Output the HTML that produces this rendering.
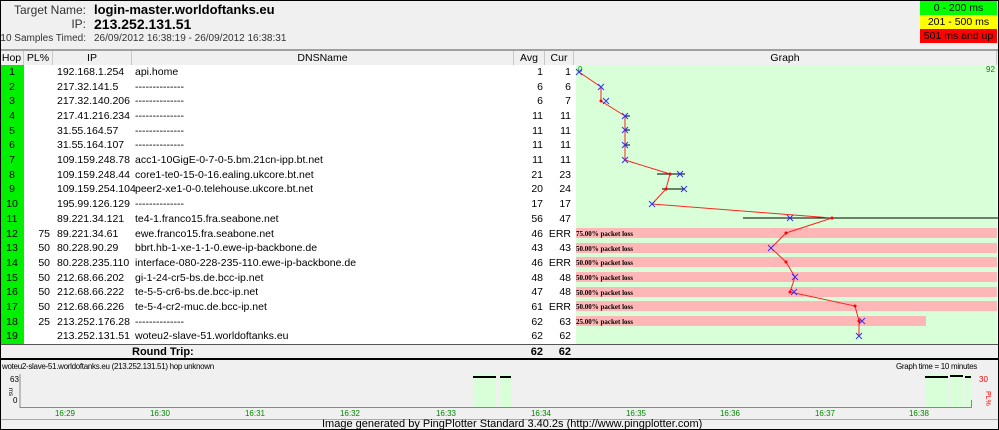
<!DOCTYPE html>
<html><head><meta charset="utf-8"><style>
*{margin:0;padding:0;box-sizing:border-box}
body{width:999px;height:430px;overflow:hidden;background:#f0f0f0;font-family:"Liberation Sans",sans-serif;font-size:10.5px;color:#000;position:relative}
.a{position:absolute;white-space:nowrap}
.lb{position:absolute;white-space:nowrap;right:913px;text-align:right;color:#333}
.r{position:absolute;left:0;width:999px;height:15px;line-height:15px}
.r div{position:absolute;top:0;height:15px}
.h{left:0;width:24px;background:#00f000;text-align:center}
.p{left:24px;width:28px;text-align:right;padding-right:2px}
.ip{left:57px}
.d{left:135px}
.av{left:514px;width:29px;text-align:right}
.cu{left:545px;width:26px;text-align:right}
.th{position:absolute;top:51px;height:14px;line-height:14px;text-align:center;background:#f0f0f0;border-right:1px solid #c8c8c8}
</style></head><body>
<div class="lb" style="top:3px;font-size:12px">Target Name:</div>
<div class="a" style="left:94px;top:2px;font-size:13px;font-weight:bold">login-master.worldoftanks.eu</div>
<div class="lb" style="top:17px;font-size:12px">IP:</div>
<div class="a" style="left:94px;top:16px;font-size:14px;font-weight:bold">213.252.131.51</div>
<div class="lb" style="top:33px;font-size:10px">10 Samples Timed:</div>
<div class="a" style="left:94px;top:33px;font-size:10px;color:#333">26/09/2012 16:38:19 - 26/09/2012 16:38:31</div>
<div class="a" style="left:920px;top:1px;width:77px;height:14px;background:#00ff00;text-align:center;line-height:14px">0 - 200 ms</div>
<div class="a" style="left:920px;top:15px;width:77px;height:14px;background:#ffff00;text-align:center;line-height:14px">201 - 500 ms</div>
<div class="a" style="left:920px;top:29px;width:77px;height:14px;background:#ff0000;text-align:center;line-height:14px">501 ms and up</div>
<div class="a" style="left:0;top:49px;width:999px;height:2px;background:#a0a0a0"></div>
<div class="a" style="left:0;top:65px;width:999px;height:279px;background:#fff"></div>
<div class="th" style="left:0;width:24px">Hop</div>
<div class="th" style="left:24px;width:29px">PL%</div>
<div class="th" style="left:53px;width:79px">IP</div>
<div class="th" style="left:132px;width:382px">DNSName</div>
<div class="th" style="left:514px;width:31px">Avg</div>
<div class="th" style="left:545px;width:29px">Cur</div>
<div class="th" style="left:574px;width:423px">Graph</div>
<div class="a" style="left:576px;top:65px;width:421px;height:279px;background:#d9ffd9"></div>
<svg class="a" style="left:0;top:0" width="999" height="360">
<g fill="#ffb6b6">
<rect x="576" y="228" width="421" height="10"/><rect x="576" y="243" width="421" height="10"/><rect x="576" y="257" width="421" height="10"/><rect x="576" y="272" width="421" height="10"/><rect x="576" y="287" width="421" height="10"/><rect x="576" y="301" width="421" height="10"/><rect x="576" y="316" width="350" height="10"/>
</g>
<g font-family="Liberation Serif" font-size="7" font-weight="bold" fill="#000">
<text x="576" y="236">75.00% packet loss</text><text x="576" y="251">50.00% packet loss</text><text x="576" y="265">50.00% packet loss</text><text x="576" y="280">50.00% packet loss</text><text x="576" y="295">50.00% packet loss</text><text x="576" y="309">50.00% packet loss</text><text x="576" y="324">25.00% packet loss</text>
</g>
<text x="578" y="72" font-size="8" fill="#080">0</text><text x="986" y="72" font-size="8" fill="#080">92</text>
<g stroke="#000" stroke-width="1">
<line x1="743" y1="218" x2="999" y2="218"/><line x1="657" y1="174" x2="685" y2="174"/><line x1="662" y1="189" x2="685" y2="189"/><line x1="625" y1="116" x2="630" y2="116"/><line x1="625" y1="130" x2="630" y2="130"/><line x1="625" y1="145" x2="630" y2="145"/>
</g>
<polyline fill="none" stroke="#f22" stroke-width="1" points="579,72 601,87 601,101 625,116 625,130 625,145 625,160 670,174 666,189 652,204 832,218 786,233 771,248 786,262 795,277 790,292 855,306 859,321 859,336"/>
<g fill="#f00">
<circle cx="670" cy="174" r="1.5"/><circle cx="666" cy="189" r="1.5"/><circle cx="832" cy="218" r="1.5"/><circle cx="786" cy="233" r="1.5"/><circle cx="786" cy="262" r="1.5"/><circle cx="790" cy="292" r="1.5"/><circle cx="855" cy="306" r="1.5"/><circle cx="859" cy="321" r="1.5"/><circle cx="601" cy="101" r="1.5"/>
</g>
<g stroke="#33f" stroke-width="1" fill="none">
<path d="M576,69l6,6m0-6l-6,6M598,84l6,6m0-6l-6,6M603,98l6,6m0-6l-6,6M622,113l6,6m0-6l-6,6M622,127l6,6m0-6l-6,6M622,142l6,6m0-6l-6,6M622,157l6,6m0-6l-6,6M677,171l6,6m0-6l-6,6M681,186l6,6m0-6l-6,6M649,201l6,6m0-6l-6,6M787,215l6,6m0-6l-6,6M768,245l6,6m0-6l-6,6M792,274l6,6m0-6l-6,6M791,289l6,6m0-6l-6,6M859,318l6,6m0-6l-6,6M856,333l6,6m0-6l-6,6"/>
</g>
<line x1="0" y1="344.5" x2="999" y2="344.5" stroke="#555"/>
<line x1="0" y1="359" x2="999" y2="359" stroke="#000" stroke-width="2"/>
</svg>
<div class="r" style="top:65px"><div class="h">1</div><div class="ip">192.168.1.254</div><div class="d">api.home</div><div class="av">1</div><div class="cu">1</div></div>
<div class="r" style="top:80px"><div class="h">2</div><div class="ip">217.32.141.5</div><div class="d">--------------</div><div class="av">6</div><div class="cu">6</div></div>
<div class="r" style="top:94px"><div class="h">3</div><div class="ip">217.32.140.206</div><div class="d">--------------</div><div class="av">6</div><div class="cu">7</div></div>
<div class="r" style="top:109px"><div class="h">4</div><div class="ip">217.41.216.234</div><div class="d">--------------</div><div class="av">11</div><div class="cu">11</div></div>
<div class="r" style="top:124px"><div class="h">5</div><div class="ip">31.55.164.57</div><div class="d">--------------</div><div class="av">11</div><div class="cu">11</div></div>
<div class="r" style="top:138px"><div class="h">6</div><div class="ip">31.55.164.107</div><div class="d">--------------</div><div class="av">11</div><div class="cu">11</div></div>
<div class="r" style="top:153px"><div class="h">7</div><div class="ip">109.159.248.78</div><div class="d">acc1-10GigE-0-7-0-5.bm.21cn-ipp.bt.net</div><div class="av">11</div><div class="cu">11</div></div>
<div class="r" style="top:168px"><div class="h">8</div><div class="ip">109.159.248.44</div><div class="d">core1-te0-15-0-16.ealing.ukcore.bt.net</div><div class="av">21</div><div class="cu">23</div></div>
<div class="r" style="top:182px"><div class="h">9</div><div class="ip">109.159.254.104</div><div class="d">peer2-xe1-0-0.telehouse.ukcore.bt.net</div><div class="av">20</div><div class="cu">24</div></div>
<div class="r" style="top:197px"><div class="h">10</div><div class="ip">195.99.126.129</div><div class="d">--------------</div><div class="av">17</div><div class="cu">17</div></div>
<div class="r" style="top:212px"><div class="h">11</div><div class="ip">89.221.34.121</div><div class="d">te4-1.franco15.fra.seabone.net</div><div class="av">56</div><div class="cu">47</div></div>
<div class="r" style="top:227px"><div class="h">12</div><div class="p">75</div><div class="ip">89.221.34.61</div><div class="d">ewe.franco15.fra.seabone.net</div><div class="av">46</div><div class="cu">ERR</div></div>
<div class="r" style="top:241px"><div class="h">13</div><div class="p">50</div><div class="ip">80.228.90.29</div><div class="d">bbrt.hb-1-xe-1-1-0.ewe-ip-backbone.de</div><div class="av">43</div><div class="cu">43</div></div>
<div class="r" style="top:256px"><div class="h">14</div><div class="p">50</div><div class="ip">80.228.235.110</div><div class="d">interface-080-228-235-110.ewe-ip-backbone.de</div><div class="av">46</div><div class="cu">ERR</div></div>
<div class="r" style="top:271px"><div class="h">15</div><div class="p">50</div><div class="ip">212.68.66.202</div><div class="d">gi-1-24-cr5-bs.de.bcc-ip.net</div><div class="av">48</div><div class="cu">48</div></div>
<div class="r" style="top:285px"><div class="h">16</div><div class="p">50</div><div class="ip">212.68.66.222</div><div class="d">te-5-5-cr6-bs.de.bcc-ip.net</div><div class="av">47</div><div class="cu">48</div></div>
<div class="r" style="top:300px"><div class="h">17</div><div class="p">50</div><div class="ip">212.68.66.226</div><div class="d">te-5-4-cr2-muc.de.bcc-ip.net</div><div class="av">61</div><div class="cu">ERR</div></div>
<div class="r" style="top:315px"><div class="h">18</div><div class="p">25</div><div class="ip">213.252.176.28</div><div class="d">--------------</div><div class="av">62</div><div class="cu">63</div></div>
<div class="r" style="top:329px"><div class="h">19</div><div class="ip">213.252.131.51</div><div class="d">woteu2-slave-51.worldoftanks.eu</div><div class="av">62</div><div class="cu">62</div></div>
<div class="r" style="top:345px;font-weight:bold;font-size:11px"><div style="left:132px">Round Trip:</div><div class="av">62</div><div class="cu">62</div></div>
<div class="a" style="left:2px;top:362px;font-size:8px;letter-spacing:-0.3px">woteu2-slave-51.worldoftanks.eu (213.252.131.51) hop unknown</div>
<div class="a" style="left:896px;top:362px;font-size:8px;letter-spacing:-0.3px">Graph time = 10 minutes</div>
<svg class="a" style="left:0;top:360px" width="999" height="70">
<g fill="#d9ffd9"><rect x="473" y="14" width="23" height="33"/><rect x="500" y="14" width="11" height="33"/><rect x="925" y="14" width="23" height="33"/><rect x="950" y="14" width="13" height="33"/><rect x="965" y="14" width="6" height="33"/></g>
<g stroke="#000" stroke-width="2"><line x1="473" y1="17" x2="496" y2="17"/><line x1="500" y1="17" x2="511" y2="17"/><line x1="925" y1="17" x2="948" y2="17"/><line x1="950" y1="16" x2="963" y2="16"/><line x1="965" y1="17" x2="971" y2="17"/></g>
<line x1="20" y1="47.5" x2="972" y2="47.5" stroke="#888"/>
<line x1="20" y1="14" x2="20" y2="48" stroke="#888"/>
<line x1="971.5" y1="40" x2="971.5" y2="48" stroke="#888"/>
<text x="10" y="22" font-size="8">63</text><text x="13" y="43" font-size="8">0</text>
<text x="10" y="33" font-size="6" transform="rotate(90 12 30)">ms</text>
<text x="979" y="22" font-size="8" fill="#f00">30</text>
<text x="981" y="30" font-size="7" fill="#f00" transform="rotate(90 983 33)">PL%</text>
<g font-size="8" fill="#080" text-anchor="middle"><text x="65" y="56">16:29</text><text x="160" y="56">16:30</text><text x="255" y="56">16:31</text><text x="350" y="56">16:32</text><text x="446" y="56">16:33</text><text x="541" y="56">16:34</text><text x="636" y="56">16:35</text><text x="730" y="56">16:36</text><text x="825" y="56">16:37</text><text x="919" y="56">16:38</text></g>
<line x1="0" y1="59.5" x2="999" y2="59.5" stroke="#aaa"/>
</svg>
<div class="a" style="left:322px;top:418px;font-size:11px">Image generated by PingPlotter Standard 3.40.2s (http://www.pingplotter.com)</div>
<div class="a" style="left:0;top:0;width:999px;height:430px;border:1px solid #000"></div>
</body></html>
